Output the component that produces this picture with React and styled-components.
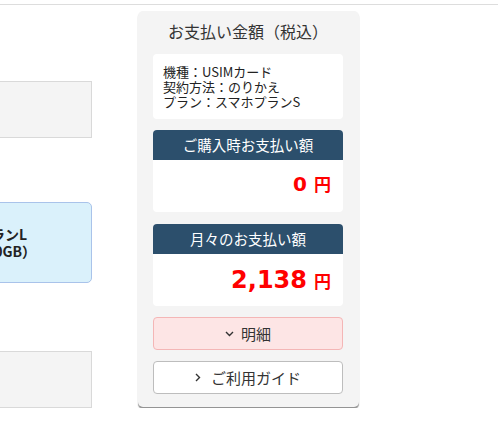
import styled, { createGlobalStyle } from "styled-components";

const Global = createGlobalStyle`
  html, body {
    margin: 0;
    background: #fff;
    font-family: "Noto Sans CJK JP", "Noto Sans", sans-serif;
    color: #333;
    overflow: hidden;
  }
`;

const TopBar = styled.div`
  height: 4px;
  border-bottom: 1px solid #dddddd;
`;

const Main = styled.div`
  display: flex;
  align-items: flex-start;
  padding-top: 6px;
`;

const PlanColumn = styled.div`
  flex: 0 0 300px;
  margin-left: -208px;
  display: flex;
  flex-direction: column;
`;

const PlanCard = styled.div`
  box-sizing: border-box;
  height: ${(p) => p.$h}px;
  margin-top: ${(p) => p.$top}px;
  background: ${(p) => (p.$active ? "#daf1fb" : "#f4f4f4")};
  border: 1px solid ${(p) => (p.$active ? "#a9c3ea" : "#d9d9d9")};
  border-radius: ${(p) => (p.$active ? "5px" : "0")};
  display: flex;
  flex-direction: column;
  justify-content: center;
  align-items: flex-end;
  padding-right: 64px;
  font-size: 14px;
  line-height: 17px;
  font-weight: 700;
  color: #222;
`;

const PlanLine = styled.span`
  margin-right: ${(p) => p.$shift || 0}px;
`;

const Panel = styled.div`
  box-sizing: border-box;
  flex: 0 0 221px;
  margin-left: 46px;
  padding: 0 16px 13px 15px;
  background: #f4f4f4;
  border-radius: 5px;
  box-shadow: 0 2px 1px rgba(60, 60, 60, 0.55);
`;

const Title = styled.div`
  text-align: center;
  font-size: 16px;
  line-height: 24px;
  padding: 8px 0 11px;
  color: #333;
`;

const Info = styled.div`
  background: #fff;
  border-radius: 4px;
  padding: 10px 10px;
  font-size: 13px;
  line-height: 15px;
  color: #222;
`;

const PriceBox = styled.div`
  margin-top: ${(p) => p.$gap}px;
  border-radius: 4px;
  overflow: hidden;
  background: #fff;
`;

const PriceHead = styled.div`
  height: 30px;
  line-height: 30px;
  text-align: center;
  color: #fff;
  font-size: 14.5px;
  background: #2c4f6c;
`;

const PriceBody = styled.div`
  box-sizing: border-box;
  height: 52px;
  padding: 14px 12px 0 0;
  display: flex;
  justify-content: flex-end;
  align-items: baseline;
  color: #ff0000;
  font-weight: 700;
`;

const Amount = styled.span`
  font-family: "DejaVu Sans", sans-serif;
  font-size: ${(p) => p.$size}px;
  line-height: 1;
`;

const Yen = styled.span`
  font-size: 17px;
  line-height: 1;
  margin-left: 7px;
`;

const Button = styled.div`
  box-sizing: border-box;
  height: 33px;
  margin-top: 11px;
  border-radius: 4px;
  border: 1px solid ${(p) => (p.$pink ? "#f4b6b6" : "#bdbdbd")};
  background: ${(p) => (p.$pink ? "#fde5e5" : "#fff")};
  display: flex;
  align-items: center;
  justify-content: center;
  gap: ${(p) => (p.$pink ? 7 : 10)}px;
  font-size: 15px;
  color: #333;
`;

const Chevron = ({ dir }) =>
  dir === "down" ? (
    <svg width="9" height="6" viewBox="0 0 9 6">
      <polyline points="1,1 4.5,4.5 8,1" fill="none" stroke="#333" strokeWidth="1.4" />
    </svg>
  ) : (
    <svg width="6" height="9" viewBox="0 0 6 9">
      <polyline points="1,1 4.5,4.5 1,8" fill="none" stroke="#333" strokeWidth="1.4" />
    </svg>
  );

const App = () => {
  return (
    <>
      <Global />
      <TopBar />
      <Main>
        <PlanColumn>
          <PlanCard $top={70} $h={57} />
          <PlanCard $top={64} $h={81} $active>
            <PlanLine>スマホプランL</PlanLine>
            <PlanLine $shift={-9}>（月30GB）</PlanLine>
          </PlanCard>
          <PlanCard $top={68} $h={57} />
        </PlanColumn>
        <Panel>
          <Title>お支払い金額（税込）</Title>
          <Info>
            機種：USIMカード
            <br />
            契約方法：のりかえ
            <br />
            プラン：スマホプランS
          </Info>
          <PriceBox $gap={11}>
            <PriceHead>ご購入時お支払い額</PriceHead>
            <PriceBody>
              <Amount $size={20}>0</Amount>
              <Yen>円</Yen>
            </PriceBody>
          </PriceBox>
          <PriceBox $gap={12}>
            <PriceHead>月々のお支払い額</PriceHead>
            <PriceBody>
              <Amount $size={24}>2,138</Amount>
              <Yen>円</Yen>
            </PriceBody>
          </PriceBox>
          <Button $pink>
            <Chevron dir="down" />
            明細
          </Button>
          <Button>
            <Chevron dir="right" />
            ご利用ガイド
          </Button>
        </Panel>
      </Main>
    </>
  );
};

export default App;
